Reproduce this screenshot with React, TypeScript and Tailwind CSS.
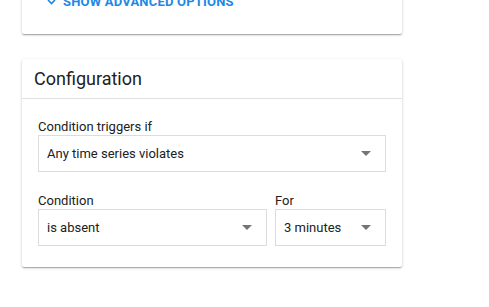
import React from 'react';

const cardShadow =
  'shadow-[0_1px_3px_rgba(0,0,0,0.2),0_1px_1px_rgba(0,0,0,0.14),0_2px_1px_-1px_rgba(0,0,0,0.12)]';

const Caret = () => (
  <svg width="10" height="5" viewBox="0 0 10 5" className="shrink-0">
    <path d="M0 0h10L5 5z" fill="#757575" />
  </svg>
);

const SelectBox: React.FC<{ value: string }> = ({ value }) => (
  <div className="flex h-[37px] items-center justify-between border border-[#dcdcdc] bg-white pl-2 pr-[14px]">
    <span className="text-[13px] text-[#212121]">{value}</span>
    <Caret />
  </div>
);

const Field: React.FC<{ label: string; value: string }> = ({ label, value }) => (
  <div className="flex flex-col">
    <label className="text-[13px] leading-4 text-[#212121]">{label}</label>
    <SelectBox value={value} />
  </div>
);

export default function App() {
  return (
    <div
      className="h-[307px] w-[489px] overflow-hidden bg-white pl-[22px]"
      style={{ fontFamily: 'Roboto, "Liberation Sans", sans-serif' }}
    >
      {/* Previous card, scrolled mostly out of view */}
      <div className={`-mt-[20px] w-[380px] rounded-[2px] bg-white pb-[22px] pl-[25px] pt-[12px] ${cardShadow}`}>
        <button className="flex h-5 items-center gap-[7px] text-[13px] font-bold uppercase tracking-[0.2px] text-[#1e88e5]">
          <svg width="9" height="6" viewBox="0 0 9 6">
            <path d="M1 1l3.5 3.5L8 1" stroke="#1e88e5" strokeWidth="1.6" fill="none" />
          </svg>
          Show advanced options
        </button>
      </div>

      {/* Configuration card */}
      <div className={`mt-[25px] w-[380px] rounded-[2px] bg-white ${cardShadow}`}>
        <div className="h-10 border-b border-[#e0e0e0] px-3 text-[18px] leading-10 text-[#212121]">
          Configuration
        </div>
        <div className="flex flex-col gap-[21px] px-4 pb-[21px] pt-5">
          <Field label="Condition triggers if" value="Any time series violates" />
          <div className="grid grid-cols-[1fr_111px] gap-2">
            <Field label="Condition" value="is absent" />
            <Field label="For" value="3 minutes" />
          </div>
        </div>
      </div>
    </div>
  );
}
